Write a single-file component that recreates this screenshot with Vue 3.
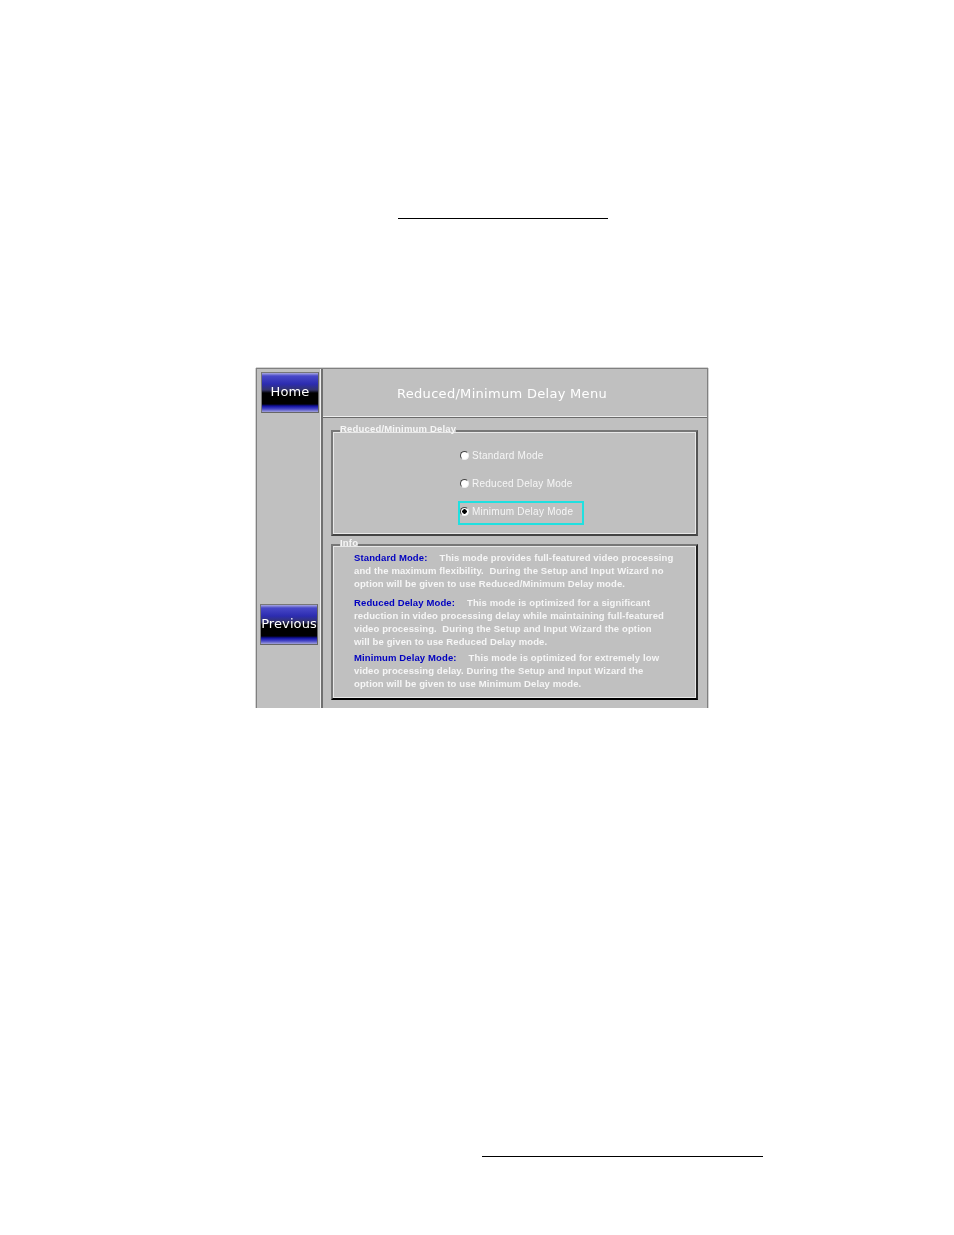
<script setup>
const modes = [
  { label: 'Standard Mode', checked: false },
  { label: 'Reduced Delay Mode', checked: false },
  { label: 'Minimum Delay Mode', checked: true },
]

const infoBlocks = [
  {
    title: 'Standard Mode:',
    first: 'This mode provides full-featured video processing',
    rest: [
      'and the maximum flexibility.  During the Setup and Input Wizard no',
      'option will be given to use Reduced/Minimum Delay mode.',
    ],
  },
  {
    title: 'Reduced Delay Mode:',
    first: 'This mode is optimized for a significant',
    rest: [
      'reduction in video processing delay while maintaining full-featured',
      'video processing.  During the Setup and Input Wizard the option',
      'will be given to use Reduced Delay mode.',
    ],
  },
  {
    title: 'Minimum Delay Mode:',
    first: 'This mode is optimized for extremely low',
    rest: [
      'video processing delay. During the Setup and Input Wizard the',
      'option will be given to use Minimum Delay mode.',
    ],
  },
]
</script>

<template>
  <div class="page">
    <div class="rule-top"></div>

    <div class="panel">
      <aside class="side">
        <button class="nav-btn home">Home</button>
        <button class="nav-btn previous">Previous</button>
      </aside>

      <main class="content">
        <h1 class="title">Reduced/Minimum Delay Menu</h1>

        <fieldset class="group modes">
          <legend>Reduced/Minimum Delay</legend>
          <div class="mode-list">
            <div
              v-for="mode in modes"
              :key="mode.label"
              class="mode"
              :class="{ focused: mode.checked }"
            >
              <span class="radio" :class="{ on: mode.checked }"></span>
              <span>{{ mode.label }}</span>
            </div>
          </div>
        </fieldset>

        <fieldset class="group info">
          <legend>Info</legend>
          <div class="info-list">
            <div v-for="block in infoBlocks" :key="block.title" class="info-block">
              <p><b>{{ block.title }}</b><span class="first">{{ block.first }}</span></p>
              <p v-for="line in block.rest" :key="line">{{ line }}</p>
            </div>
          </div>
        </fieldset>
      </main>
    </div>

    <div class="rule-bottom"></div>
  </div>
</template>

<style>
html, body {
  margin: 0;
  background: #fff;
}
</style>

<style scoped>
.page {
  width: 954px;
  height: 1235px;
  overflow: hidden;
  background: #fff;
  padding-top: 218px;
  box-sizing: border-box;
}

.rule-top {
  width: 210px;
  height: 1px;
  margin-left: 398px;
  background: #000;
}

.rule-bottom {
  width: 281px;
  height: 1px;
  margin: 448px 0 0 482px;
  background: #000;
}

.panel {
  display: grid;
  grid-template-columns: 66px 1fr;
  width: 452px;
  height: 340px;
  margin: 149px 0 0 256px;
  box-sizing: border-box;
  background: #c0c0c0;
  border-top: 1px solid #808080;
  border-left: 1px solid #808080;
  border-right: 1px solid #808080;
  box-shadow: 0 -1px 0 #d4d4d4, -1px 0 0 #d4d4d4, 1px 0 0 #d4d4d4;
  font-family: "DejaVu Sans", sans-serif;
  color: #fff;
  filter: blur(.3px);
}

.side {
  display: flex;
  flex-direction: column;
  border-right: 2px solid #707070;
  box-shadow: inset -1px 0 0 #eee;
}

.nav-btn {
  flex: none;
  width: 58px;
  height: 41px;
  padding: 0 0 2px;
  border: 1px solid #777;
  border-bottom-color: #666;
  border-right-color: #666;
  background: linear-gradient(#a8a8e0 0, #4848c8 3px, #2c2cb0 11px, #34346a 17px, #000 20px, #000 31px, #1010a0 33px, #4848c8 36px, #c0c0e0 40px);
  color: #fff;
  font-family: "DejaVu Sans", sans-serif;
  font-size: 13px;
  letter-spacing: .1px;
  line-height: 1;
  white-space: nowrap;
}

.home {
  margin: 3px 0 0 4px;
}

.previous {
  margin: 191px 0 0 3px;
}

.content {
  display: flex;
  flex-direction: column;
  min-width: 0;
}

.title {
  height: 48px;
  margin: 0;
  padding-right: 26px;
  border-bottom: 1px solid #6a6a6a;
  box-shadow: inset 0 -1px 0 #eee;
  text-align: center;
  font-size: 13px;
  font-weight: 400;
  line-height: 49px;
  letter-spacing: .3px;
}

.group {
  width: 367px;
  margin: 0 0 0 8px;
  padding: 0;
  box-sizing: border-box;
  border: 2px solid;
  border-color: #777 #555 #444 #777;
  box-shadow: inset 1px 1px 0 #e8e8e8, inset -1px -1px 0 #e8e8e8;
  font-family: "Liberation Sans", sans-serif;
  font-size: 9.5px;
  font-weight: 700;
  letter-spacing: .12px;
  color: #f6f6f6;
}

.group legend {
  margin-left: 7px;
  padding: 0 0 5px;
  line-height: 11px;
  letter-spacing: .18px;
}

.modes {
  height: 113px;
  margin-top: 5px;
}

.mode-list {
  padding: 6px 0 0 125px;
}

.mode {
  display: flex;
  align-items: center;
  gap: 3px;
  width: 126px;
  height: 24px;
  margin-bottom: 4px;
  padding: 0 0 4px 2px;
  box-sizing: border-box;
  font-size: 10px;
  font-weight: 400;
  letter-spacing: .25px;
}

.mode.focused {
  border: 2px solid #20e0e0;
  padding: 0 0 3px 0;
}

.radio {
  width: 7px;
  height: 7px;
  border-radius: 50%;
  background: #fff;
  border: 1px solid #444;
  border-right-color: #eee;
  border-bottom-color: #eee;
  flex: none;
}

.radio.on {
  background: radial-gradient(circle, #000 0 2px, #fff 2.5px);
}

.info {
  height: 163px;
  margin-top: 1px;
  border-bottom-color: #000;
  border-right-color: #222;
}

.info-list {
  margin-top: -2px;
  padding-left: 21px;
}

.info-block + .info-block {
  margin-top: 6px;
}

.info-block:last-child {
  margin-top: 3px;
}

.info-block p {
  margin: 0;
  line-height: 13px;
  white-space: pre;
}

.info-block b {
  color: #0000c0;
}

.first {
  margin-left: 12px;
}
</style>
